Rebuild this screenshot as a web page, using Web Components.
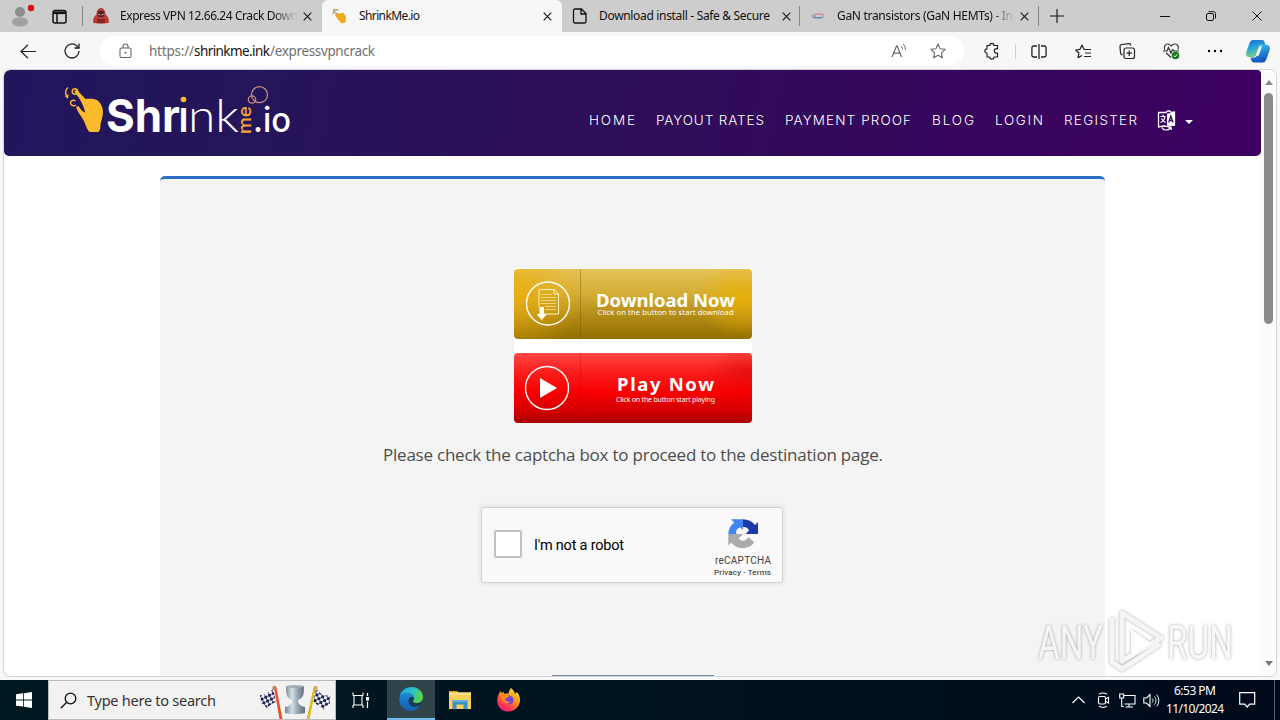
<!DOCTYPE html>
<html lang="en">
<head>
<meta charset="utf-8">
<title>ShrinkMe.io</title>
<style>
    html, body {
        margin: 0;
        width: 1280px;
        height: 720px;
        overflow: hidden;
        background: #f7f7f7;
        font-family: "Noto Sans", "Open Sans", sans-serif;
    }
</style>
</head>
<body>
<desktop-screen></desktop-screen>

<script>
const ICONS = {
    profile: `<circle cx="8" cy="7" r="5" fill="#8d8d8d"/><path d="M0 18c0-4 3-5.500 8-5.500s8 1.500 8 5.500c-1.500 2.500-4.500 3.500-8 3.500s-6.500-1-8-3.500z" fill="#a1a1a1"/><circle cx="19" cy="3" r="3.200" fill="#e00b1c"/>`,
    workspaces: `<rect x="1" y="1.500" width="13" height="12.500" rx="2" fill="none" stroke="#111" stroke-width="1.500"/><path d="M1 3.800h13" stroke="#111" stroke-width="2.600"/><path d="M5 4v10" stroke="#111" stroke-width="1.500"/>`,
    hacker: `<path d="M8 0c3 0 4.500 3 4.600 6.500C15 8 16 11 16 14.500c-2 1.500-14 1.500-16 0C0 11 1 8 3.400 6.500 3.500 3 5 0 8 0z" fill="#b93a36"/><path d="M5 5c0-3 6-3 6 0l-.6 4H5.600z" fill="#3c2325"/><path d="M4 11h8v4H4z" fill="#8a2725"/><path d="M5.500 6l2 1M10.500 6l-2 1" stroke="#e9b5a8"/>`,
    hand: `<path d="M4 5l4 .5 3-1 3 4-.5 6-4 1-4-4.500L3 7z" fill="#f0a91f"/><path d="M5 6L1.500 2.500M1 6.500l1-5L6.500 2" stroke="#b7a274" fill="none" stroke-width="1.300"/>`,
    file: `<path d="M3 1h6.500L14 5.500V13.500a1.500 1.500 0 0 1-1.500 1.500h-9.500a1.500 1.500 0 0 1-1.500-1.500v-11A1.500 1.500 0 0 1 3 1zM9 1v5h5" fill="none" stroke="#111" stroke-width="1.300"/>`,
    chip: `<ellipse cx="7.500" cy="8" rx="6.500" ry="3" fill="#a9aebf"/><path d="M3 7c3-1.500 7-1 11-.5" stroke="#e58f89" stroke-width="1.300" fill="none"/><path d="M3 9.500h10" stroke="#7186b0" stroke-width="1.300"/><path d="M6 8h6" stroke="#e8e8ee" stroke-width="1"/>`,
    close: `<path d="M.7.700l7.600 7.600M8.300.700L.7 8.300" stroke="#1b1b1b" stroke-width="1.200"/>`,
    plus: `<path d="M7 0v14M0 7h14" stroke="#111" stroke-width="1.100"/>`,
    minimize: `<path d="M0 5.500h10" stroke="#111"/>`,
    restore: `<rect x=".5" y="2.500" width="7" height="7" rx="1.500" fill="none" stroke="#111"/><path d="M2.500.7H7.500a2 2 0 0 1 2 2V7.500" fill="none" stroke="#111"/>`,
    winclose: `<path d="M.5.500l9 9M9.500.500l-9 9" stroke="#111"/>`,
    back: `<path d="M16 7.500H1M8 .8L1 7.500l7 6.700" fill="none" stroke="#222" stroke-width="1.200"/>`,
    refresh: `<path d="M15 8a7 7 0 1 1-2.300-5.200L15 5" fill="none" stroke="#222" stroke-width="1.300"/><path d="M15 .5V5h-4.500" fill="none" stroke="#222" stroke-width="1.300"/>`,
    lock: `<rect x="1" y="5" width="11" height="9.500" rx="1.500" fill="none" stroke="#666" stroke-width="1.100"/><path d="M4 5V3.500a2.500 2.500 0 0 1 5 0V5" fill="none" stroke="#666" stroke-width="1.100"/><circle cx="6.500" cy="9.700" r="1" fill="#666"/>`,
    read: `<path d="M1 14L5.500 3h.8L10.500 14M2.500 10.200h6.600" fill="none" stroke="#666" stroke-width="1.200"/><path d="M10 3c1.200 1 1.500 2.300 1.300 3.600M12 1c2 1.500 2.700 3.800 2.200 6.200" fill="none" stroke="#666"/>`,
    star: `<path d="M8 1l2.100 4.700 5 .6-3.700 3.500 1 5L8 12.300 3.600 14.800l1-5L.9 6.300l5-.6z" fill="none" stroke="#666" stroke-width="1.100" stroke-linejoin="round"/>`,
    puzzle: `<path d="M3 2.500h2.800a2.100 2.100 0 0 1 4.200 0H13.500v3.200h-1a2.200 2.200 0 0 0 0 4.400h1V14H10a2.100 2.100 0 0 1-4.200 0H3v-4a2.100 2.100 0 0 1 0-4.200z" fill="none" stroke="#222" stroke-width="1.200" stroke-linejoin="round"/>`,
    split: `<path d="M6 2H2.700A1.800 1.800 0 0 0 .9 3.800v7.400A1.800 1.800 0 0 0 2.700 13H6M10 2h3.300a1.800 1.800 0 0 1 1.800 1.800v7.400a1.800 1.800 0 0 1-1.800 1.800H10" fill="none" stroke="#222" stroke-width="1.300"/><path d="M8 0v15" stroke="#222" stroke-width="1.300"/>`,
    favorites: `<path d="M10.500 5.500L8.800 5 7 1 5 5.300.7 6l3.200 3-.8 4.600L7 11.500" fill="none" stroke="#222" stroke-width="1.200" stroke-linejoin="round"/><path d="M9 5.500h7M10 9h6M9 12.500h7" stroke="#222" stroke-width="1.200"/>`,
    collections: `<rect x="5" y="5" width="10.500" height="10.500" rx="2" fill="none" stroke="#222" stroke-width="1.200"/><path d="M3.500 12A2.500 2.500 0 0 1 1.500 9.500L1 3.700A2 2 0 0 1 2.800 1.500l7-.8a2 2 0 0 1 2.100 1.800M10.200 7.500v5.500M7.500 10.200H13" fill="none" stroke="#222" stroke-width="1.200"/>`,
    health: `<path d="M1.700 7C.4 3.300 2.500 1 4.700 1c1.800 0 2.800 1 3.600 2C9 2 10.200 1 12 1c2.400 0 4.200 2.500 3 5.500M3 9.800l5 4.700" fill="none" stroke="#333" stroke-width="1.200"/><path d="M0 8h4l1.500-3.500L8 10l1.700-3.500L11 8h5" fill="none" stroke="#333" stroke-width="1.200"/><circle cx="12.500" cy="12.500" r="3.800" fill="#187a1c"/><path d="M10.800 12.700l1.200 1.200 2.300-2.600" stroke="#fff" fill="none"/>`,
    more: `<circle cx="2" cy="8" r="1.200"/><circle cx="8" cy="8" r="1.200"/><circle cx="14" cy="8" r="1.200"/>`,
    copilot: `<defs><linearGradient id="a" x2=".3" y2="1"><stop stop-color="#1768d2"/><stop offset=".5" stop-color="#25a6d8"/><stop offset="1" stop-color="#7bd17f"/></linearGradient><linearGradient id="b" x2=".3" y2="1"><stop stop-color="#3bc5ec"/><stop offset="1" stop-color="#1454c4"/></linearGradient></defs>
        <path d="M8 0h8c2 0 2.500 1.500 3 3.500.3 1 .8 1.500 2 1.500h-5c-2 0-2.500 1-3.200 3.500L11 13c-1 3-2 4-4 4H3.500C.5 17-.3 15 .3 12L3.500 3C4.500.5 6 0 8 0z" fill="url(#a)"/>
        <path d="M16 22.500H8c-2 0-2.500-1.500-3-3.500-.2-.7-.7-1.500-1.500-1.500H8c2 0 2.700-1 3.400-3.500L13.200 9c1-3 2-4 4-4h3.300c3 0 3.800 2 3.200 5l-3.200 9c-1 3-2.500 3.500-4.500 3.500z" fill="url(#b)"/><path d="M13 6.500h3L12.500 15.800H9.700z" fill="#f3f8fb"/>`,
    language: `<path d="M1.500 2.500h7L11 1h1.500l2 1.500L17.500 2v13l-7 1.500-4-.5-5 1z" fill="none" stroke="#fff" stroke-width="1.300"/><path d="M10 3.500L17.500 2.500V16L10 15.500z" fill="#fff"/><path d="M3.500 6.500h5M6 4.700v2M8 6.500c-.5 3-2 5-4.500 6M4.500 8.500c1 2 2.500 3.300 4 4" stroke="#fff" stroke-width="1.200" fill="none"/><path d="M11.700 12.500L13.800 6l2.200 6.500M12.500 10.500h2.800" fill="none" stroke="#341056" stroke-width="1.300"/><path d="M5 17.500c1 3 6 3.500 8.500.5M11.500 17.500l2.500 0 .3 2.500" fill="none" stroke="#fff" stroke-width="1.200"/>`,
    windows: `<path d="M0 2.300L7 1.300V7.500H0zM7.800 1.200L16 0v7.500H7.800zM0 8.400h7v6.200L0 13.700zM7.800 8.400H16V16l-8.200-1.200z" fill="#fff"/>`,
    search: `<circle cx="10.500" cy="6.500" r="5.300" fill="none" stroke="#111" stroke-width="1.300"/><path d="M6.700 10.300L.8 16.200" stroke="#111" stroke-width="1.300"/>`,
    trophy: `<defs><linearGradient id="s"><stop stop-color="#74828e"/><stop offset=".35" stop-color="#d6dfe4"/><stop offset=".65" stop-color="#92a2ad"/><stop offset="1" stop-color="#5e6c78"/></linearGradient><pattern id="c" width="6" height="6" patternUnits="userSpaceOnUse" patternTransform="rotate(18)"><path d="M0 0h6v6H0z" fill="#eceef5"/><path d="M0 0h3v3H0zM3 3h3v3H3z" fill="#20264f"/></pattern></defs>
        <path d="M27 2h18c0 7 0 12-6 14 0 3 1 5.500 7 7v6c-4 1.500-16 1.500-20 0v-6c6-1.500 7-4 7-7C27 14 27 9 27 2z" fill="url(#s)"/><ellipse cx="36" cy="2.500" rx="9" ry="1.500" fill="#9faab2"/>
        <path d="M15 3l2.500 1 6.500 34h-3z" fill="#e94e26"/><path d="M57 3l-2.500 1L47 38h3z" fill="#d9bd20"/><circle cx="15.500" cy="4" r="2.200" fill="#c88266"/><circle cx="56.500" cy="4" r="2.200" fill="#d5ac5f"/>
        <path d="M14 5c-3 3-4 3-7 5-2 1-3 1-6 1 0 4 2 5 1 9 3-1 3 2 7 5 1-4 5-6 8-7z" fill="url(#c)"/><path d="M57 5c4 2 3 4 7 6 3 1 4 0 8 1-2 3-1 5-1 9-3-1-4 2-7 5-2-4-6-6-10-7z" fill="url(#c)"/>`,
    taskview: `<path d="M1 3.500V.5M1 3.500h10M11 3.500v-3M1 16v-3M1 13h10M11 16v-3M2 4v9M10 4v9" fill="none" stroke="#fff" stroke-width="1.100"/><path d="M15.500 1v3M15.500 9.500V16" stroke="#fff" stroke-width="1.200"/><path d="M14 5h3v3.500h-3z" fill="#fff"/>`,
    edge: `<defs><linearGradient id="e" x2="1" y2=".3"><stop stop-color="#1a9ce4"/><stop offset=".6" stop-color="#2bc3c7"/><stop offset="1" stop-color="#58d44f"/></linearGradient><linearGradient id="f" x2="0" y2="1"><stop stop-color="#2187d8"/><stop offset="1" stop-color="#135eae"/></linearGradient></defs>
        <path d="M.5 10C1.500 4 6.500 0 12.500 0 19 0 24 4.500 24 10c0 4-3 6-6.500 6-2.500 0-4-1-3.500-2 1-1 1.500-2 1-3.500C14 7 10.500 5.500 7 6c-3 .4-5 2-6.500 4z" fill="url(#e)"/><path d="M.3 11C2 7 5 5.500 8.500 6c4 .3 6.700 2.500 6.700 5-2-1.500-5.500-.5-5.500 3.500 0 5 6 7 11 3.500C19 22 15.500 24 12 24 5 24-.5 18 .3 11z" fill="url(#f)"/><path d="M9.700 14.500c-1-4 3-5.500 5-4-.1 1.700-1.500 2.500-1 3.800 1 2.500 4.500 2.700 8 1.200.6-.2 1 .2.7.9-5.500 6.500-12 3-12.700-1.900z" fill="#173e58"/>`,
    folder: `<path d="M0 2h8l2 2H0z" fill="#e79d1d"/><path d="M0 3.500h22V20H0z" fill="#f9d15b"/><path d="M0 3.500h22V6H0z" fill="#fbdf83"/><path d="M3.500 20v-9h15v9h-4v-4.500h-7V20z" fill="#3991cd"/><path d="M3.500 11h15v2h-15z" fill="#64b0dc"/>`,
    firefox: `<defs><linearGradient id="g" x1=".8" x2=".2" y2="1"><stop stop-color="#ffe12c"/><stop offset=".45" stop-color="#ff8a1c"/><stop offset=".75" stop-color="#ff3750"/><stop offset="1" stop-color="#e31587"/></linearGradient></defs>
        <path d="M14 0c2.500 2 3.500 4 4 6l1.800-2c4 4 4.200 10 1.200 14.500C16 26 4 25 1 17-.6 12.500.5 8 2.500 5l.5-2 2 2 1.500-1.300 1 2.300c1.500-.5 3-.5 4-.2C11.500 4 12.500 2 14 0z" fill="url(#g)"/><circle cx="12" cy="12" r="4.500" fill="#7243d7"/><path d="M4 8c3-1.500 6-1 8.500.8-2 .2-2.200 1.500-4.500 1.800.5 2.500 3 4 6 3-3 4-9 1.500-10-5.600z" fill="#ff8a22"/>`,
    chevron: `<path d="M.5 7L6.500 1l6 6" fill="none" stroke="#fff" stroke-width="1.200"/>`,
    meet: `<rect x="1.500" y="4.500" width="7" height="7.500" rx="1.500" fill="none" stroke="#fff" stroke-width="1.200"/><path d="M8.500 7l3-1.500v5.500l-3-1.500M2 2.300c2-1.700 6-1.700 8 0M2 14.200c2 1.700 6 1.700 8 0" fill="none" stroke="#fff" stroke-width="1.100"/>`,
    network: `<path d="M4.500 2.500H16v8.500H5.500M10 11v3M6.500 14h7.500M.7 1h4v4h-4zM2.700 5v8.500h2" fill="none" stroke="#fff" stroke-width="1.100"/>`,
    volume: `<path d="M.8 5h2.700L7 1.500v12L3.500 10H.8z" fill="none" stroke="#fff" stroke-width="1.100"/><path d="M9.300 5.500c1 1.200 1 2.800 0 4M11.500 3.500c2 2.500 2 5.500 0 8M13.700 1.700c2.800 3.500 2.800 8 0 11.600" fill="none" stroke="#fff"/>`,
    notice: `<path d="M.7.700h15v11.500h-5L8.200 15l-2.500-2.800h-5z" fill="none" stroke="#fff" stroke-width="1.200"/>`,
    recaptcha: `<path d="M30 14.500V3l-3 3C24 2.300 20 .2 15 .2V8c3-.5 5 1 6 3.500L17.500 15H30z" fill="#1c3aa9"/><path d="M15 .2H3l3.200 3.300C2.500 6.300.5 10 .3 15h8c-.5-4 1-6 4-6.500L15 11z" fill="#4285f4"/><path d="M.3 15v11.500l3-3c4 5.500 12 8 20 3l3-3L20.500 18c-2 4-7 5-10 1.500L15 15z" fill="#ababab"/>`
};

// <ui-icon name w h> draws one glyph from the table above
class UiIcon extends HTMLElement {
    constructor() {
        super();
        this.attachShadow({ mode: 'open' });
    }

    connectedCallback() {
        const w = this.getAttribute('w') || 16;
        const h = this.getAttribute('h') || w;
        this.shadowRoot.innerHTML = `
            <style>
                :host { display: block; flex: none; width: ${w}px; height: ${h}px; }
                svg { display: block; overflow: visible; }
            </style>
            <svg width="${w}" height="${h}" viewBox="0 0 ${w} ${h}">${ICONS[this.getAttribute('name')]}</svg>
        `;
    }
}
customElements.define('ui-icon', UiIcon);

// One line of text tracked out (or in) to the width in the "w" attribute
class FitText extends HTMLElement {
    constructor() {
        super();
        this.attachShadow({ mode: 'open' });
        this.shadowRoot.innerHTML = `
            <style>
                :host { display: block; flex: none; }
                span { display: inline-block; white-space: nowrap; vertical-align: top; }
            </style>
            <span><slot></slot></span>
        `;
    }

    connectedCallback() {
        this.fit();
    }

    fit() {
        const width = parseFloat(this.getAttribute('w'));
        const span = this.shadowRoot.querySelector('span');
        this.style.width = width + 'px';
        const count = this.textContent.length;
        const natural = span.getBoundingClientRect().width;
        if (natural && count > 1) {
            span.style.letterSpacing = ((width - natural) / (count - 1)) + 'px';
        }
    }
}

class BrowserTab extends HTMLElement {
    constructor() {
        super();
        this.attachShadow({ mode: 'open' });
    }

    connectedCallback() {
        const fade = this.hasAttribute('fade');
        this.shadowRoot.innerHTML = `
            <style>
                :host {
                    display: flex;
                    align-items: center;
                    box-sizing: border-box;
                    width: 239px;
                    height: 32px;
                    padding: 0 10px 0 10px;
                    font-size: 12px;
                    line-height: 18px;
                    color: #111;
                    background: #cdcdcd;
                }
                :host([active]) { width: 240px; background: #f7f7f7; border-radius: 6px 6px 0 0; }
                .title {
                    width: 180px;
                    margin-left: 11px;
                    overflow: hidden;
                    ${fade ? 'mask-image: linear-gradient(90deg, #000 152px, transparent 178px);' : ''}
                }
                .x { margin-left: auto; }
            </style>
            <ui-icon name="${this.getAttribute('icon')}"></ui-icon>
            <div class="title"><fit-text w="${this.getAttribute('w')}">${this.getAttribute('title-text')}</fit-text></div>
            <ui-icon class="x" name="close" w="9"></ui-icon>
        `;
    }
}

class TabStrip extends HTMLElement {
    constructor() {
        super();
        this.attachShadow({ mode: 'open' });
        this.shadowRoot.innerHTML = `
            <style>
                :host { display: flex; align-items: center; height: 32px; background: #cdcdcd; }
                .left { display: flex; align-items: center; width: 82px; gap: 18px; }
                .left ui-icon:first-child { margin: 0 0 0 12px; }
                .left ui-icon + ui-icon { margin-left: -1px; }
                i { flex: none; width: 1px; height: 20px; background: #858585; }
                .plus { margin-left: 11px; }
                .win { display: flex; align-items: center; gap: 36px; margin: 0 18px 0 auto; }
            </style>
            <div class="left">
                <ui-icon name="profile" w="23" h="22"></ui-icon>
                <ui-icon name="workspaces" w="15"></ui-icon>
            </div>
            <i></i>
            <browser-tab icon="hacker" w="178" fade title-text="Express VPN 12.66.24 Crack Down"></browser-tab>
            <browser-tab active icon="hand" w="61" title-text="ShrinkMe.io"></browser-tab>
            <browser-tab icon="file" w="171" title-text="Download install - Safe &amp;amp; Secure"></browser-tab>
            <i style="margin-left:-2px"></i>
            <browser-tab icon="chip" w="176" fade title-text="GaN transistors (GaN HEMTs) - In"></browser-tab>
            <i style="margin-left:-1px"></i>
            <ui-icon class="plus" name="plus" w="14"></ui-icon>
            <div class="win">
                <ui-icon name="minimize" w="10"></ui-icon>
                <ui-icon name="restore" w="10"></ui-icon>
                <ui-icon name="winclose" w="10"></ui-icon>
            </div>
        `;
    }
}

class NavBar extends HTMLElement {
    constructor() {
        super();
        this.attachShadow({ mode: 'open' });
        this.shadowRoot.innerHTML = `
            <style>
                :host { display: flex; align-items: center; height: 38px; padding-left: 6px; background: #f7f7f7; }
                .btn { display: flex; flex: none; justify-content: center; width: 44px; }
                .pill {
                    display: flex;
                    align-items: center;
                    box-sizing: border-box;
                    width: 864px;
                    height: 30px;
                    margin: 0 6px 0 6px;
                    padding: 0 18px 0 19px;
                    border-radius: 15px;
                    background: #fff;
                    font-size: 13.5px;
                    color: #707070;
                }
                .url { display: flex; flex: 1; margin-left: 17px; }
                .url .host { color: #111; }
                .pill .star { margin-left: 23px; }
                i { width: 1px; height: 15px; margin: 0 1px 0 1px; background: #d0d0d0; }
            </style>
            <div class="btn"><ui-icon name="back" w="17" h="15"></ui-icon></div>
            <div class="btn"><ui-icon name="refresh" w="16"></ui-icon></div>
            <div class="pill">
                <ui-icon name="lock" w="13" h="16"></ui-icon>
                <div class="url">
                    <fit-text w="45">https://</fit-text>
                    <fit-text w="76" class="host">shrinkme.ink</fit-text>
                    <fit-text w="105">/expressvpncrack</fit-text>
                </div>
                <ui-icon name="read" w="16"></ui-icon>
                <ui-icon class="star" name="star" w="16"></ui-icon>
            </div>
            <div class="btn"><ui-icon name="puzzle" w="16"></ui-icon></div>
            <i></i>
            <div class="btn"><ui-icon name="split" w="16" h="15"></ui-icon></div>
            <div class="btn"><ui-icon name="favorites" w="16" h="15"></ui-icon></div>
            <div class="btn"><ui-icon name="collections" w="16"></ui-icon></div>
            <div class="btn"><ui-icon name="health" w="16"></ui-icon></div>
            <div class="btn"><ui-icon name="more" w="16"></ui-icon></div>
            <div class="btn" style="width:42px"><ui-icon name="copilot" w="24" h="23"></ui-icon></div>
        `;
    }
}

class SiteLogo extends HTMLElement {
    constructor() {
        super();
        this.attachShadow({ mode: 'open' });
        this.shadowRoot.innerHTML = `
            <style>
                :host { display: block; }
                svg { display: block; overflow: visible; font-family: Inter, Lato, sans-serif; fill: #fff; }
            </style>
            <svg width="232" height="56" viewBox="60 82 232 56">
                <g fill="none" stroke="#fbb92c">
                    <circle cx="75" cy="91.500" r="2.800" stroke-width="1.400"/>
                    <path d="M68 87.500c-3 2-3 7-1 9.500M65.500 96l2 1.500.5-3M76 105c-2 1.500-5.500.5-5.500-2s3-3.500 5-2" stroke-width="1.400"/>
                </g>
                <path d="M74 91l3-1 8.500 9c4-.5 8-.5 11.500 1 3.500 2.500 6 7 6 12-.3 6-2 9-2.500 13 0 3.500-1 7-2.500 7H90c-2 0-4-6-6-11-2-4-6-8-8-14l2.500-1c2 3 4 6 6.500 6.500-.5-5-3-9-5-13z" fill="#fbb92c"/>
                <text x="106" y="132" font-size="45" font-weight="700" textLength="74" lengthAdjust="spacingAndGlyphs">Shr</text>
                <text x="178.500" y="132" font-size="44" font-weight="600" textLength="10" lengthAdjust="spacingAndGlyphs">ı</text>
                <circle cx="183.500" cy="99.500" r="2.800" fill="#fbb92c"/>
                <text x="188" y="132" font-size="46" font-family="Lato, sans-serif" font-weight="300" textLength="51" lengthAdjust="spacingAndGlyphs">nk</text>
                <text transform="translate(251 134) rotate(-90)" font-size="18" font-weight="500" fill="#f7a832" textLength="28" lengthAdjust="spacingAndGlyphs">me</text>
                <text x="253" y="132" font-size="34" font-weight="500" textLength="38" lengthAdjust="spacingAndGlyphs">.io</text>
                <g fill="none" stroke="#c58e7d" stroke-width="1.300"><circle cx="259.500" cy="94.700" r="8"/><circle cx="252" cy="99.500" r="3.700"/></g>
            </svg>
        `;
    }
}

class SiteHeader extends HTMLElement {
    constructor() {
        super();
        this.attachShadow({ mode: 'open' });
        this.shadowRoot.innerHTML = `
            <style>
                :host {
                    display: flex;
                    justify-content: space-between;
                    box-sizing: border-box;
                    width: 1257px;
                    height: 86px;
                    padding: 12px 68px 0 56px;
                    border-radius: 6px 4px 5px 5px;
                    background: linear-gradient(100deg, #21165c 0%, #25155a 20%, #300c59 55%, #3d0061 100%);
                    color: #fff;
                    font-family: Inter, sans-serif;
                    font-size: 13.5px;
                    font-weight: 300;
                }
                nav { display: flex; align-items: center; gap: 21px; height: 76px; }
                .lang { display: flex; align-items: center; gap: 9px; margin-left: -1px; }
                .caret { border: 4px solid transparent; border-top-color: #fff; border-bottom: 0; margin-top: 4px; }
            </style>
            <site-logo></site-logo>
            <nav>
                <fit-text w="46">HOME</fit-text>
                <fit-text w="108">PAYOUT RATES</fit-text>
                <fit-text w="126">PAYMENT PROOF</fit-text>
                <fit-text w="42">BLOG</fit-text>
                <fit-text w="48">LOGIN</fit-text>
                <fit-text w="73">REGISTER</fit-text>
                <div class="lang"><ui-icon name="language" w="19" h="20"></ui-icon><div class="caret"></div></div>
            </nav>
        `;
    }
}

class PromoButton extends HTMLElement {
    constructor() {
        super();
        this.attachShadow({ mode: 'open' });
        this.shadowRoot.innerHTML = `
            <style>
                :host {
                    display: flex;
                    align-items: center;
                    box-sizing: border-box;
                    width: 238px;
                    height: 70px;
                    border-radius: 4px;
                    color: #fff;
                    font-family: "Noto Sans", "Open Sans", sans-serif;
                }
                :host([kind="download"]) {
                    background:
                        radial-gradient(ellipse 70px 60px at 0 26px, rgba(238, 176, 10, .8), transparent),
                        radial-gradient(ellipse 50px 38px at 230px 30px, rgba(236, 176, 0, .85), transparent),
                        linear-gradient(#e4c35a 0%, #d3ad34 35%, #ad8614 72%, #927000 100%);
                }
                :host([kind="play"]) {
                    background:
                        radial-gradient(ellipse 45px 26px at 235px 20px, rgba(210, 0, 0, .5), transparent),
                        linear-gradient(#ff4747 0%, #fb2020 25%, #fa0000 55%, #d40000 82%, #a90000 100%);
                }
                .badge { flex: none; width: 66px; height: 70px; border-right: 1px solid rgba(120, 70, 0, .35); }
                :host([kind="play"]) .badge { border-color: rgba(200, 0, 0, .3); }
                .text { flex: 1; display: flex; flex-direction: column; align-items: center; padding: 0 1px 0 0; }
                .big { font-weight: 700; font-size: 18.5px; line-height: 16px; }
                .small { margin-top: 0; font-size: 7.5px; line-height: 9px; }
                :host([kind="play"]) .small { font-size: 7px; line-height: 9px; margin-top: 3px; }
                :host([kind="play"]) .text { padding: 3px 1px 0 0; }
            </style>
            <div class="badge"><slot name="badge"></slot></div>
            <div class="text">
                <div class="big"><slot name="title"></slot></div>
                <div class="small"><slot name="note"></slot></div>
            </div>
        `;
    }
}

class CaptchaBox extends HTMLElement {
    constructor() {
        super();
        this.attachShadow({ mode: 'open' });
        this.shadowRoot.innerHTML = `
            <style>
                :host {
                    display: flex;
                    align-items: center;
                    box-sizing: border-box;
                    width: 302px;
                    height: 76px;
                    margin-right: 1px;
                    padding: 0 11px 0 12px;
                    border: 1px solid #d3d3d3;
                    border-radius: 3px;
                    background: #f9f9f9;
                    box-shadow: 0 0 4px 1px rgba(0, 0, 0, .08);
                    font-family: Roboto, sans-serif;
                    color: #000;
                }
                .check { box-sizing: border-box; width: 28px; height: 28px; margin-top: -2px; border: 2px solid #c1c1c1; border-radius: 2px; background: #fff; }
                .label { margin-left: 12px; font-size: 14.5px; }
                .brand { display: flex; flex-direction: column; align-items: center; margin: 6px 0 0 auto; color: #444; }
                .name { margin: 4px 0 0 1px; font-size: 10px; line-height: 13px; }
                .links { font-size: 8px; line-height: 11px; color: #222; }
            </style>
            <div class="check"></div>
            <fit-text w="90" class="label">I'm not a robot</fit-text>
            <div class="brand">
                <ui-icon name="recaptcha" w="30" h="31"></ui-icon>
                <fit-text w="56" class="name">reCAPTCHA</fit-text>
                <fit-text w="57" class="links">Privacy - Terms</fit-text>
            </div>
        `;
    }
}

class SitePage extends HTMLElement {
    constructor() {
        super();
        this.attachShadow({ mode: 'open' });
        this.shadowRoot.innerHTML = `
            <style>
                :host {
                    display: flex;
                    box-sizing: border-box;
                    height: 606px;
                    margin: 0 4px 4px 4px;
                    border-radius: 6px;
                    background: #fff;
                    overflow: hidden;
                    box-shadow: 0 0 0 1px #d4d4d4;
                }
                .view { width: 1257px; height: 606px; overflow: hidden; }
                .card {
                    display: flex;
                    flex-direction: column;
                    align-items: center;
                    box-sizing: border-box;
                    width: 945px;
                    height: 500px;
                    margin: 20px 0 0 156px;
                    padding-top: 89px;
                    border-top: 3px solid #2c6ec4;
                    border-radius: 5px 5px 0 0;
                    background: #f4f4f4;
                }
                .promo { display: flex; flex-direction: column; gap: 14px; padding-top: 1px; background: #fff; }
                .hint { margin: 19px 0 39px 1px; font-family: "Open Sans", sans-serif; font-size: 17px; line-height: 26px; color: #4d4d4d; }
                .submit { width: 162px; height: 1px; margin-top: 92px; background: #6e8aa8; }
                .bar { display: flex; flex-direction: column; align-items: center; width: 15px; background: #fcfcfc; }
                .up, .down { border: 4.5px solid transparent; }
                .up { border-bottom: 5px solid #888; border-top: 0; margin-top: 10px; }
                .thumb { width: 9px; height: 231px; margin-top: 8px; border-radius: 5px; background: #8b8b8b; }
                .down { border-top: 5px solid #777; border-bottom: 0; margin: auto 0 10px; }
            </style>
            <div class="view">
                <site-header></site-header>
                <div class="card">
                    <div class="promo">
                        <promo-button kind="download">
                            <svg slot="badge" width="66" height="70" fill="none" stroke="#fff">
                                <circle cx="34" cy="34.500" r="21.500" stroke-width="1.400"/>
                                <path d="M29 45h15.500V25l-4-4.500H25V38M40 20.500V25h4.500" stroke="#fff3c0" stroke-width="1"/>
                                <path d="M27 25.500h11M27 28.500h15M27 31.500h15M27 34.500h15M31 37.500h11M31 40.500h11" stroke="#f5df98" stroke-width=".8"/>
                                <path d="M25.500 38h4.500v7h3l-5.300 6-5.200-6h3z" fill="#fff" stroke="none"/>
                            </svg>
                            <fit-text slot="title" w="139">Download Now</fit-text>
                            <fit-text slot="note" w="136">Click on the button to start download</fit-text>
                        </promo-button>
                        <promo-button kind="play">
                            <svg slot="badge" width="66" height="70">
                                <circle cx="33" cy="35" r="21.500" fill="none" stroke="#fff" stroke-width="1.400"/>
                                <path d="M26 25v20l17-10z" fill="#fff"/>
                            </svg>
                            <fit-text slot="title" w="97">Play Now</fit-text>
                            <fit-text slot="note" w="99">Click on the button start playing</fit-text>
                        </promo-button>
                    </div>
                    <fit-text w="500" class="hint">Please check the captcha box to proceed to the destination page.</fit-text>
                    <captcha-box></captcha-box>
                    <div class="submit"></div>
                </div>
            </div>
            <div class="bar"><div class="up"></div><div class="thumb"></div><div class="down"></div></div>
        `;
    }
}

class TaskBar extends HTMLElement {
    constructor() {
        super();
        this.attachShadow({ mode: 'open' });
        this.shadowRoot.innerHTML = `
            <style>
                :host {
                    display: flex;
                    align-items: center;
                    height: 40px;
                    background: linear-gradient(90deg, #001820 0%, #00131f 55%, #000a1c 100%);
                    color: #fff;
                    font-size: 12px;
                }
                .cell { display: flex; flex: none; align-items: center; justify-content: center; box-sizing: border-box; width: 48px; height: 40px; }
                .search {
                    display: flex;
                    align-items: center;
                    box-sizing: border-box;
                    width: 288px;
                    height: 40px;
                    padding-left: 11px;
                    border: 1px solid #b9bcbd;
                    background: #f2f2f2;
                    color: #333;
                    font-size: 14.5px;
                    overflow: hidden;
                }
                .search fit-text { margin: 0 43px 0 10px; }
                .search ui-icon:last-child { margin-top: 3px; }
                .open { background: #304549; border-bottom: 2px solid #76b9ed; margin: 0 1px 0 3px; }
                .tray { display: flex; align-items: center; margin-left: auto; }
                .clock { display: flex; flex-direction: column; align-items: center; width: 58px; margin: 0 15px 0 6px; line-height: 18px; }
                .tray > ui-icon { margin-right: 10px; }
                .tray > .end { margin-right: 19px; }
                i { width: 1px; height: 40px; margin-right: 5px; background: #59616b; }
            </style>
            <div class="cell"><ui-icon name="windows" w="16"></ui-icon></div>
            <div class="search">
                <ui-icon name="search" w="17"></ui-icon>
                <fit-text w="129">Type here to search</fit-text>
                <ui-icon name="trophy" w="72" h="36"></ui-icon>
            </div>
            <div class="cell"><ui-icon name="taskview" w="17"></ui-icon></div>
            <div class="cell open"><ui-icon name="edge" w="24"></ui-icon></div>
            <div class="cell"><ui-icon name="folder" w="22"></ui-icon></div>
            <div class="cell"><ui-icon name="firefox" w="23" h="24"></ui-icon></div>
            <div class="tray">
                <ui-icon name="chevron" w="13" h="8" style="margin-right:12px"></ui-icon>
                <ui-icon name="meet" w="12" h="16"></ui-icon>
                <ui-icon name="network" w="17" h="15" style="margin-right:7px"></ui-icon>
                <ui-icon name="volume" w="17" h="15" style="margin-right:0"></ui-icon>
                <div class="clock"><fit-text w="42">6:53 PM</fit-text><fit-text w="58">11/10/2024</fit-text></div>
                <ui-icon name="notice" w="16" class="end"></ui-icon>
                <i></i>
            </div>
        `;
    }
}

// Translucent mark floating over the desktop
class RunMark extends HTMLElement {
    constructor() {
        super();
        this.attachShadow({ mode: 'open' });
        this.shadowRoot.innerHTML = `
            <style>
                :host { position: absolute; left: 1030px; top: 602px; pointer-events: none; }
                svg { display: block; filter: drop-shadow(0 0 1.5px rgba(0, 0, 0, .4)); font-family: Roboto, sans-serif; }
            </style>
            <svg width="210" height="76" opacity=".85">
                <g fill="#f6f6f6" font-size="49" font-weight="400">
                    <text x="8" y="57" textLength="65" lengthAdjust="spacingAndGlyphs">ANY</text>
                    <text x="137" y="57" textLength="66" lengthAdjust="spacingAndGlyphs">RUN</text>
                </g>
                <path d="M82 57V16M82 56.500V60l10 7 38-25M92 59V11l39 25z" fill="none" stroke="#f4f4f4" stroke-width="5" stroke-linejoin="round"/>
                <path d="M101 27v28l20-14z" fill="#fff"/>
            </svg>
        `;
    }
}

class DesktopScreen extends HTMLElement {
    constructor() {
        super();
        this.attachShadow({ mode: 'open' });
        this.shadowRoot.innerHTML = `
            <style>
                :host { display: flex; flex-direction: column; width: 1280px; height: 720px; }
            </style>
            <tab-strip></tab-strip>
            <nav-bar></nav-bar>
            <site-page></site-page>
            <task-bar></task-bar>
            <run-mark></run-mark>
        `;
    }
}

customElements.define('browser-tab', BrowserTab);
customElements.define('tab-strip', TabStrip);
customElements.define('nav-bar', NavBar);
customElements.define('site-logo', SiteLogo);
customElements.define('site-header', SiteHeader);
customElements.define('promo-button', PromoButton);
customElements.define('captcha-box', CaptchaBox);
customElements.define('site-page', SitePage);
customElements.define('task-bar', TaskBar);
customElements.define('run-mark', RunMark);
customElements.define('desktop-screen', DesktopScreen);
// last, so that the text is already laid out when it is measured
customElements.define('fit-text', FitText);
</script>
</body>
</html>
